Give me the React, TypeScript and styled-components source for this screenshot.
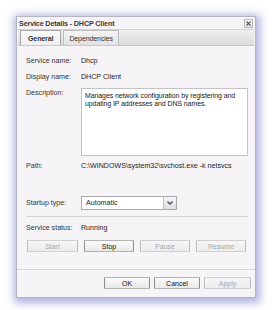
import React from 'react'
import styled, { createGlobalStyle, css } from 'styled-components'

const GlobalStyle = createGlobalStyle`
    html, body {
        margin: 0;
        padding: 0;
        background: #ffffff;
    }

    body {
        font-family: "Liberation Sans", Arial, sans-serif;
        color: #222;
    }
`

const Page = styled.div`
    width: 272px;
    height: 310px;
    padding: 16px 0 0 16px;
    box-sizing: border-box;
`

const Dialog = styled.div`
    width: 240px;
    height: 282px;
    box-sizing: border-box;

    display: flex;
    flex-flow: column nowrap;

    background: #f6f4f6;
    border: 1px solid #b4b4c4;
    box-shadow: 1px 2px 8px 3px rgba(100, 100, 190, 0.5);
`

const TitleBar = styled.div`
    height: 12px;
    padding: 0 2px 0 2px;

    display: flex;
    align-items: center;
    justify-content: space-between;
`

const Title = styled.span`
    font-size: 7.2px;
    font-weight: bold;
    letter-spacing: -0.15px;
    color: #3a3a3a;
`

const CloseBox = styled.div`
    width: 7px;
    height: 7px;
    border: 1px solid #b8b8b8;
    background: linear-gradient(#fdfdfd, #e4e4e4);

    display: flex;
    align-items: center;
    justify-content: center;
`

const TabStrip = styled.div`
    height: 17px;
    margin: 0 1px;
    padding: 1px 0 0 2px;
    box-sizing: border-box;

    display: flex;
    align-items: flex-end;
    gap: 2px;

    background: linear-gradient(#eeeeee, #dcdcdc);
    border-top: 1px solid #d2d2d2;
    border-bottom: 1px solid #c8c8c8;
`

interface TabProps {
    $active?: boolean
}

const Tab = styled.div<TabProps>`
    height: 15px;
    padding: 0 5px;
    box-sizing: border-box;

    display: flex;
    align-items: center;

    font-size: 7px;
    letter-spacing: -0.1px;
    color: #333;
    border: 1px solid #bdbdbd;
    border-bottom-width: 0;
    background: linear-gradient(#f4f4f4, #e2e2e2);

    ${({ $active }) => $active && css`
        font-weight: bold;
        padding: 0 7px;
        background: linear-gradient(#fafafa, #eeeeee);
        border-color: #a8a8a8;
    `}
`

const Panel = styled.div`
    flex: 1;
    padding: 10px 7px 0 9px;

    display: flex;
    flex-flow: column nowrap;
`

interface RowProps {
    $gap?: number
}

const Row = styled.div<RowProps>`
    display: grid;
    grid-template-columns: 55px 1fr;
    align-items: center;
    margin-top: ${({ $gap }) => $gap ?? 0}px;

    font-size: 7.1px;
    line-height: 10px;
`

const TopRow = styled(Row)`
    align-items: start;
`

const Label = styled.span`
    color: #333;
`

const Value = styled.span`
    color: #1c1c1c;
    white-space: nowrap;
`

const TextArea = styled.div`
    height: 68px;
    box-sizing: border-box;
    padding: 3px 3px;

    background: #ffffff;
    border: 1px solid #c4c4c4;

    font-size: 7px;
    letter-spacing: -0.1px;
    line-height: 8px;
    color: #222;
`

const Select = styled.div`
    width: 96px;
    height: 14px;
    box-sizing: border-box;

    display: flex;
    align-items: stretch;

    background: #ffffff;
    border: 1px solid #a9a9a9;
`

const SelectText = styled.span`
    flex: 1;
    padding-left: 4px;
    line-height: 12px;
    color: #222;
`

const SelectArrow = styled.div`
    width: 12px;
    display: flex;
    align-items: center;
    justify-content: center;

    background: linear-gradient(#f6f6f6, #dedede);
    border-left: 1px solid #c0c0c0;
`

const Separator = styled.div<RowProps>`
    height: 1px;
    margin: ${({ $gap }) => $gap ?? 0}px 0 0 1px;
    background: #d2d2d2;
`

interface ButtonRowProps {
    $gap: number
    $justify?: string
}

const ButtonRow = styled.div<ButtonRowProps>`
    display: flex;
    justify-content: ${({ $justify }) => $justify ?? 'flex-start'};
    gap: ${({ $gap }) => $gap}px;
`

const StatusButtons = styled(ButtonRow)`
    margin: 7px 0 0 1px;
`

interface ButtonProps {
    $width: number
    disabled?: boolean
}

const Button = styled.div<ButtonProps>`
    width: ${({ $width }) => $width}px;
    height: 12px;
    box-sizing: border-box;

    display: flex;
    align-items: center;
    justify-content: center;

    font-size: 7px;
    color: #111;
    background: linear-gradient(#fbfbfb, #e8e8e8);
    border: 1px solid #b4b4b4;
    border-left-color: #8c8c8c;
    border-right-color: #8c8c8c;
    border-radius: 1px;

    ${({ disabled }) => disabled && css`
        color: #a8a8a8;
        background: linear-gradient(#f6f6f6, #ececec);
        border-color: #d0d0d0;
        border-left-color: #bcbcbc;
        border-right-color: #bcbcbc;
    `}
`

const Footer = styled.div`
    height: 28px;
    box-sizing: border-box;
    padding: 7px 4px 0 0;
    border-top: 1px solid #d6d6d6;
`

const CloseIcon = () => (
    <svg width="5" height="5" viewBox="0 0 5 5">
        <path d="M0.5 0.5 L4.5 4.5 M4.5 0.5 L0.5 4.5" stroke="#555" strokeWidth="1.1" />
    </svg>
)

const ChevronIcon = () => (
    <svg width="6" height="4" viewBox="0 0 6 4">
        <path d="M0.5 0.5 L3 3 L5.5 0.5" stroke="#3b4a6b" strokeWidth="1.3" fill="none" />
    </svg>
)

export default function App() {
    return (
        <Page>
            <GlobalStyle />
            <Dialog>
                <TitleBar>
                    <Title>Service Details - DHCP Client</Title>
                    <CloseBox><CloseIcon /></CloseBox>
                </TitleBar>

                <TabStrip>
                    <Tab $active>General</Tab>
                    <Tab>Dependencies</Tab>
                </TabStrip>

                <Panel>
                    <Row>
                        <Label>Service name:</Label>
                        <Value>Dhcp</Value>
                    </Row>
                    <Row $gap={6}>
                        <Label>Display name:</Label>
                        <Value>DHCP Client</Value>
                    </Row>
                    <TopRow $gap={6}>
                        <Label>Description:</Label>
                        <TextArea>
                            Manages network configuration by registering and updating IP addresses and DNS names.
                        </TextArea>
                    </TopRow>
                    <Row $gap={5}>
                        <Label>Path:</Label>
                        <Value>C:\WINDOWS\system32\svchost.exe -k netsvcs</Value>
                    </Row>
                    <Row $gap={25}>
                        <Label>Startup type:</Label>
                        <Select>
                            <SelectText>Automatic</SelectText>
                            <SelectArrow><ChevronIcon /></SelectArrow>
                        </Select>
                    </Row>

                    <Separator $gap={6} />

                    <Row $gap={6}>
                        <Label>Service status:</Label>
                        <Value>Running</Value>
                    </Row>
                    <StatusButtons $gap={6}>
                        <Button $width={51} disabled>Start</Button>
                        <Button $width={50}>Stop</Button>
                        <Button $width={50} disabled>Pause</Button>
                        <Button $width={50} disabled>Resume</Button>
                    </StatusButtons>
                </Panel>

                <Footer>
                    <ButtonRow $gap={4} $justify="flex-end">
                        <Button $width={46}>OK</Button>
                        <Button $width={46}>Cancel</Button>
                        <Button $width={47} disabled>Apply</Button>
                    </ButtonRow>
                </Footer>
            </Dialog>
        </Page>
    )
}
